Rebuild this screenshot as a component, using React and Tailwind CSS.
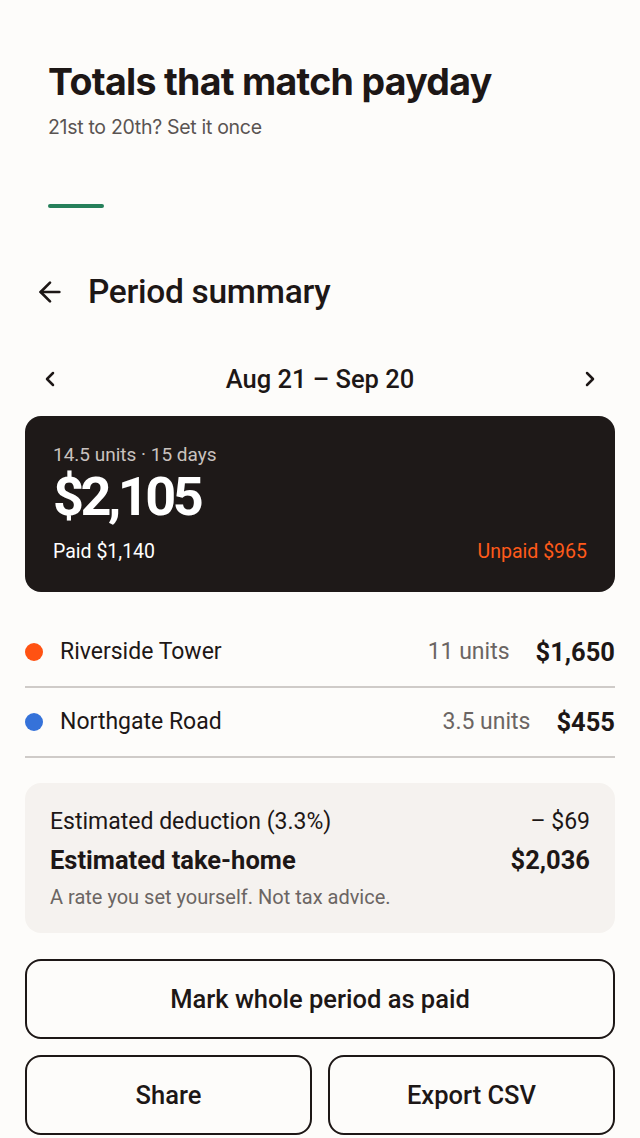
import { ArrowLeft, ChevronLeft, ChevronRight } from "lucide-react";

const rows = [
  { name: "Riverside Tower", units: "11 units", amount: "$1,650", dot: "bg-[#ff5212]" },
  { name: "Northgate Road", units: "3.5 units", amount: "$455", dot: "bg-[#3572d9]" },
];

export default function App() {
  return (
    <div className="min-h-[1138px] bg-[#fdfcfa] text-[#1d1716] font-['Roboto',sans-serif]">
      {/* Intro */}
      <div className="px-12 pt-[58px] font-['Inter',sans-serif]">
        <h1 className="text-[37.5px] leading-[48px] font-bold tracking-[-0.7px]">Totals that match payday</h1>
        <p className="mt-[9px] text-[19.5px] leading-6 text-[#5a5452] tracking-[-0.3px]">21st to 20th? Set it once</p>
        <div className="mt-[65px] h-1 w-14 rounded-full bg-[#26805a]" />
      </div>

      {/* Header */}
      <div className="mt-[64px] flex items-center gap-[22px] px-[34px]">
        <ArrowLeft size={32} strokeWidth={2} />
        <h2 className="text-[33.5px] leading-10 font-medium tracking-[-0.3px]">Period summary</h2>
      </div>

      {/* Date nav */}
      <div className="mt-[51px] flex items-center justify-between px-[38px]">
        <ChevronLeft size={24} strokeWidth={2.5} />
        <span className="text-[25.5px] leading-8 font-medium">Aug 21 – Sep 20</span>
        <ChevronRight size={24} strokeWidth={2.5} />
      </div>

      <div className="px-[25px]">
        {/* Total card */}
        <div className="mt-[21px] rounded-2xl bg-[#1e1918] px-7 pt-[27px] pb-[28px]">
          <div className="text-[19px] leading-6 text-[#c9c2bf]">14.5 units · 15 days</div>
          <div className="mt-[2px] text-[54px] leading-[56px] font-bold text-white tracking-[-3.5px]">$2,105</div>
          <div className="mt-[15px] flex items-center justify-between text-[19.5px] leading-6">
            <span className="text-white">Paid $1,140</span>
            <span className="text-[#ff5a1a]">Unpaid $965</span>
          </div>
        </div>

        {/* Rows */}
        <div className="mt-[26px]">
          {rows.map((r) => (
            <div key={r.name} className="flex h-[70px] items-center border-b-2 border-[#cfcbc8]">
              <span className={`h-[18px] w-[18px] rounded-full ${r.dot}`} />
              <span className="ml-[17px] flex-1 text-[23px]">{r.name}</span>
              <span className="text-[23px] text-[#6b6563]">{r.units}</span>
              <span className="ml-[26px] text-[25.5px] font-bold">{r.amount}</span>
            </div>
          ))}
        </div>

        {/* Take-home */}
        <div className="mt-[25px] rounded-2xl bg-[#f5f2ef] px-[25px] pt-[25px] pb-[24px]">
          <div className="flex justify-between text-[23px] leading-7">
            <span>Estimated deduction (3.3%)</span>
            <span>– $69</span>
          </div>
          <div className="mt-[10px] flex justify-between text-[25.5px] leading-7 font-bold">
            <span>Estimated take-home</span>
            <span>$2,036</span>
          </div>
          <div className="mt-[11px] text-[20px] leading-6 text-[#6b6563]">A rate you set yourself. Not tax advice.</div>
        </div>

        {/* Actions */}
        <button className="mt-[26px] flex h-20 w-full items-center justify-center rounded-2xl border-2 border-[#1d1716] text-[25.5px] font-medium">
          Mark whole period as paid
        </button>
        <div className="mt-4 grid grid-cols-2 gap-4">
          <button className="flex h-20 items-center justify-center rounded-2xl border-2 border-[#1d1716] text-[25.5px] font-medium">
            Share
          </button>
          <button className="flex h-20 items-center justify-center rounded-2xl border-2 border-[#1d1716] text-[25.5px] font-medium">
            Export CSV
          </button>
        </div>
      </div>
    </div>
  );
}
